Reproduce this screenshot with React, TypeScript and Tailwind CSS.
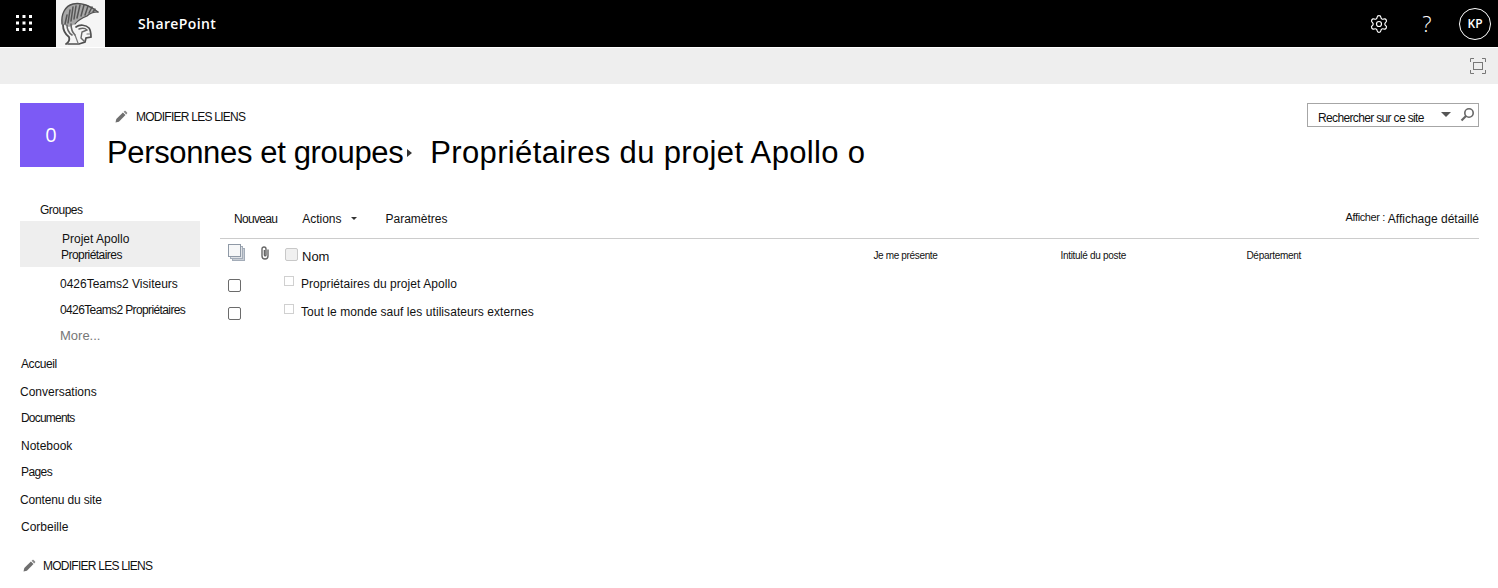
import React from 'react';
import { Settings } from 'lucide-react';

const Pencil = () => (
  <svg width="14" height="14" viewBox="0 0 14 14" className="shrink-0">
    <path d="M1.5 12.5l.8-3.4 6.6-6.6 2.6 2.6-6.6 6.6z" fill="#6f6f6f" />
    <path d="M9.6 1.8l.9-.9c.3-.3.8-.3 1.1 0l1.500 1.500c.3.3.3.8 0 1.100l-.9.9z" fill="#8a8a8a" />
  </svg>
);

// spartan helmet logo, hand drawn
const Helmet = () => (
  <svg width="49" height="47" viewBox="0 0 49 47" fill="none" stroke="#4f4f4f" strokeLinecap="round">
    {/* plume */}
    <path d="M6 24C5 14 9 6 17 4c8-2 18 2 25 8-4 0-8 1-11 4-5 2-9 4-12 8l-6 3z" fill="#a8a8a8" stroke="none" />
    <path d="M6 24C5 14 9 6 17 4c8-2 18 2 25 8" strokeWidth="1.400" />
    <path d="M42 12c-4 0-8 1-11 4-5 2-9 4-12 8" strokeWidth="1.200" />
    <path d="M9 24l2-9M12 23l2-13M15 21l2-14M18 19l2-13M21 18l3-13M25 16l3-11M29 15l3-9M33 13l3-6M37 12l2-3" strokeWidth="1.500" stroke="#555" />
    {/* helmet back and neck */}
    <path d="M7 25c0 5 2 9 6 12 1 3 0 5-3 7" strokeWidth="1.800" />
    <path d="M11 25c0 4 2 8 5 10M15 24c0 4 1 8 4 11" strokeWidth="1.600" stroke="#666" />
    {/* bowl and cheek guard */}
    <path d="M20 27c4-3 10-2 13 1 2 3 2 6 2 9l-5 1-1 4-6 2-11 0" strokeWidth="1.700" />
    <path d="M23 29c3-1 6-1 8 1l-5 2-1 6 3 3" strokeWidth="1.400" stroke="#666" />
    <path d="M19 35l3 8M31 34l3 0" strokeWidth="1.200" stroke="#777" />
  </svg>
);

const Row = ({ label }: { label: string }) => (
  <div className="flex h-[28px] items-center">
    <span className="ml-[8px] mt-[2px] h-[13px] w-[13px] rounded-[2px] border border-[#6b6b6b] bg-white" />
    <span className="mb-[6px] ml-[43px] h-[10px] w-[10px] border border-[#d0d0d0] bg-white" />
    <span className="ml-[7px] text-[12px] tracking-[0.06px] text-[#111]">{label}</span>
  </div>
);

const navTop = [
  { label: 'Accueil', cls: 'h-[27px] ml-[21px] tracking-[-0.4px]' },
  { label: 'Conversations', cls: 'h-[28px] pt-[2px] ml-[20px]' },
  { label: 'Documents', cls: 'h-[26px] ml-[21px] tracking-[-0.8px]' },
  { label: 'Notebook', cls: 'h-[28px] pt-[2px] ml-[21px]' },
  { label: 'Pages', cls: 'h-[26px] ml-[21px] tracking-[-0.6px]' },
  { label: 'Contenu du site', cls: 'h-[28px] pt-[2px] ml-[20px] tracking-[-0.15px]' },
  { label: 'Corbeille', cls: 'h-[27px] ml-[21px]' },
];

export default function App() {
  return (
    <div className="h-[588px] w-[1498px] overflow-hidden bg-white font-['Liberation_Sans',Arial,sans-serif] text-[12px] text-[#111]">
      {/* suite bar */}
      <div className="flex h-[47px] items-center bg-black text-white">
        <div className="flex h-full w-[56px] items-center pb-[1px] pl-[16px]">
          <svg width="16" height="16" viewBox="0 0 16 16" fill="#fff">
            {[0, 6.5, 13].map((y) =>
              [0, 6.5, 13].map((x) => <rect key={`${x}-${y}`} x={x} y={y} width="3" height="3" />),
            )}
          </svg>
        </div>
        <div className="flex h-full w-[49px] items-center justify-center bg-[#f5f5f5]">
          <Helmet />
        </div>
        <div className="ml-[33px] font-['Open_Sans',sans-serif] text-[14px] font-semibold tracking-[0.4px]">SharePoint</div>
        <div className="ml-auto flex items-center">
          <Settings size={20} strokeWidth={1.4} />
          <div className="ml-[32px] w-[12px] text-center font-['Open_Sans',sans-serif] text-[22px] font-light">?</div>
          <div className="ml-[26px] mr-[7px] flex h-[32px] w-[32px] items-center justify-center rounded-full border border-white font-['Open_Sans',sans-serif] text-[12px] font-semibold">
            KP
          </div>
        </div>
      </div>

      {/* ribbon */}
      <div className="mt-[1px] flex h-[36px] items-center justify-end bg-[#eeeeee] pr-[12px]">
        <svg width="16" height="16" viewBox="0 0 16 16" fill="none" stroke="#777" strokeWidth="1">
          <rect x="3.5" y="4.5" width="9" height="7" />
          <path d="M.5 4V.5H4M12 .5h3.5V4M.5 12v3.500H4M12 15.500h3.500V12" />
        </svg>
      </div>

      {/* title area */}
      <div className="flex h-[97px] items-start pl-[20px] pt-[19px]">
        <div className="flex h-[64px] w-[64px] shrink-0 items-center justify-center bg-[#7c5af5] pr-[2px] font-['Open_Sans',sans-serif] text-[20px] text-white">
          0
        </div>
        <div className="ml-[23px]">
          <div className="flex h-[28px] items-center pb-[1px] pl-[7px] text-[12px]">
            <Pencil />
            <span className="ml-[8px] tracking-[-0.75px]">MODIFIER LES LIENS</span>
          </div>
          <div className="relative mt-[2px] flex text-[31px] leading-[40px] text-black">
            <span className="tracking-[-0.35px]">Personnes et groupes</span>
            <span className="relative top-[16px] ml-[4px] h-0 w-0 border-y-[4px] border-l-[5px] border-y-transparent border-l-[#333]" />
            <span className="ml-[18px] tracking-[0.35px]">Propriétaires du projet Apollo o</span>
          </div>
        </div>
        <div className="ml-auto mr-[19px] flex h-[24px] w-[172px] shrink-0 items-center border border-[#a6a6a6] pl-[10px] pt-[2px]">
          <span className="mt-[3px] whitespace-nowrap tracking-[-0.65px]">Rechercher sur ce site</span>
          <span className="mb-[3px] ml-[17px] h-0 w-0 border-x-[5px] border-t-[5px] border-x-transparent border-t-[#555]" />
          <svg width="15" height="15" viewBox="0 0 15 15" fill="none" className="mb-[3px] ml-[9px]" stroke="#666">
            <circle cx="9" cy="6" r="4.200" strokeWidth="1.600" />
            <path d="M6 9l-4.500 4.500" strokeWidth="2.200" />
          </svg>
        </div>
      </div>

      <div className="flex">
        {/* left nav */}
        <nav className="w-[220px] shrink-0 pt-[18px]">
          <div className="ml-[40px] flex h-[22px] items-center tracking-[-0.5px]">Groupes</div>
          <div className="ml-[20px] h-[46px] w-[180px] bg-[#eeeeee] pt-[10px] leading-[16px]">
            <div className="ml-[42px]">Projet Apollo</div>
            <div className="ml-[41px] tracking-[-0.55px]">Propriétaires</div>
          </div>
          <div className="ml-[60px] mt-[4px] flex h-[26px] items-center">0426Teams2 Visiteurs</div>
          <div className="ml-[60px] flex h-[26px] items-center tracking-[-0.62px]">0426Teams2 Propriétaires</div>
          <div className="ml-[60px] flex h-[26px] items-center text-[13px] text-[#777]">More...</div>
          <div className="mt-[1px]">
            {navTop.map((item) => (
              <div key={item.label} className={`flex items-center ${item.cls}`}>
                {item.label}
              </div>
            ))}
          </div>
          <div className="ml-[22px] mt-[16px] flex h-[20px] items-center">
            <Pencil />
            <span className="ml-[7px] tracking-[-0.75px]">MODIFIER LES LIENS</span>
          </div>
        </nav>

        {/* list */}
        <main className="w-[1259px] pt-[21px]">
          <div className="flex h-[37px] items-center border-b border-[#cccccc] pb-[3px]">
            <span className="ml-[14px] tracking-[-0.7px]">Nouveau</span>
            <span className="ml-[25px]">Actions</span>
            <span className="ml-[9px] h-0 w-0 border-x-[3px] border-t-[3px] border-x-transparent border-t-[#333]" />
            <span className="ml-[29px]">Paramètres</span>
            <span className="mb-[2px] ml-auto text-[11px] tracking-[-0.4px]">Afficher :</span>
            <span className="ml-[3px]">Affichage détaillé</span>
          </div>
          <div className="flex h-[31px] items-center">
            <svg width="18" height="18" viewBox="0 0 18 18" className="mb-[4px] ml-[8px] shrink-0" fill="#fff" stroke="#a3acb8">
              <rect x="4.500" y="4.500" width="12" height="12" fill="#c8cdd4" />
              <rect x="2.500" y="2.500" width="12" height="12" fill="#dfe2e6" />
              <rect x=".5" y=".5" width="12" height="12" fill="#f6f7f8" stroke="#8f99a6" />
            </svg>
            <svg width="10" height="14" viewBox="0 0 10 14" fill="none" stroke="#666" strokeWidth="1.400" className="mb-[3px] ml-[14px] shrink-0">
              <path d="M8 3.500v6.500a3 3 0 0 1-6 0V3a2 2 0 0 1 4 0v6a.8.8 0 0 1-1.600 0V4" />
            </svg>
            <span className="mb-[1px] ml-[15px] h-[13px] w-[13px] rounded-[2px] border border-[#c8c8c8] bg-[#f0f0f0]" />
            <span className="ml-[4px] mt-[4px] text-[13px]">Nom</span>
            <div className="ml-[544px] mt-[1px] w-[187px] text-[10px] tracking-[-0.35px]">Je me présente</div>
            <div className="mt-[1px] w-[186px] text-[10px] tracking-[-0.3px]">Intitulé du poste</div>
            <div className="mt-[1px] text-[10px] tracking-[-0.3px]">Département</div>
          </div>
          <Row label="Propriétaires du projet Apollo" />
          <Row label="Tout le monde sauf les utilisateurs externes" />
        </main>
      </div>
    </div>
  );
}
